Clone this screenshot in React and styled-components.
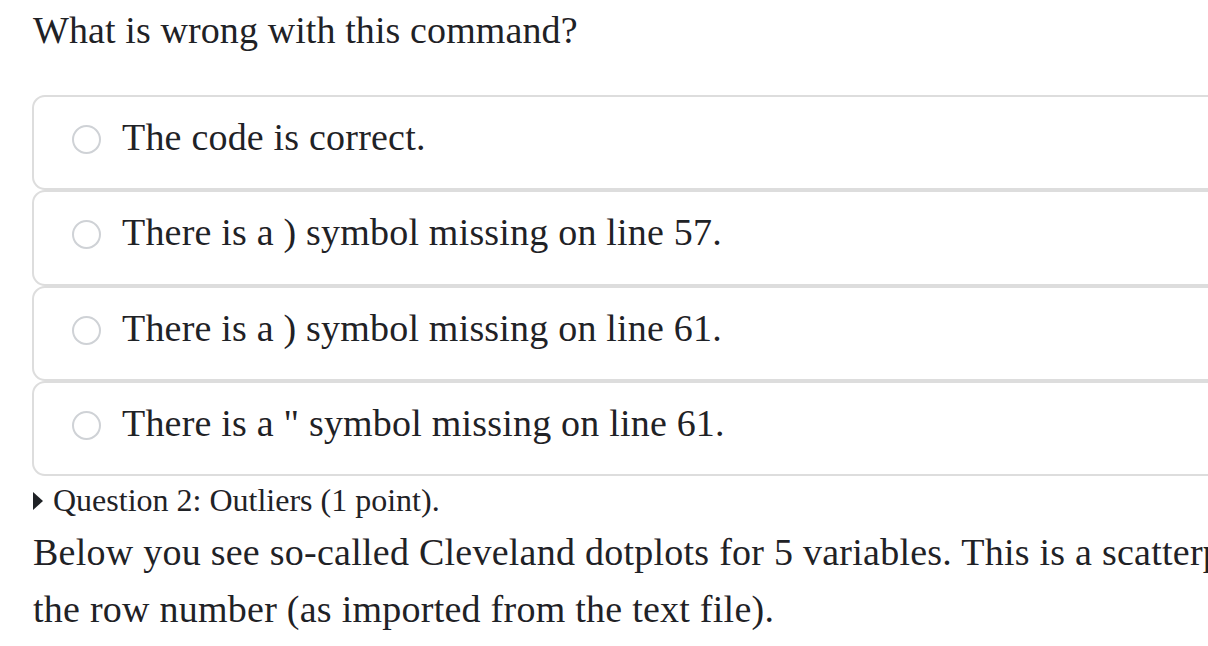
import React from "react";
import styled, { createGlobalStyle } from "styled-components";

const Global = createGlobalStyle`
  html, body { margin: 0; padding: 0; background: #fff; overflow: hidden; }
  body { font-family: "Liberation Serif", "Times New Roman", serif; color: #1f2226; }
`;

const Page = styled.div`
  width: 1400px;
  padding: 2px 0 0 33px;
  box-sizing: border-box;
`;

const Title = styled.p`
  margin: 0 0 36px 0;
  font-size: 38px;
  line-height: 57px;
  letter-spacing: 0.1px;
`;

const Options = styled.div`
  display: flex;
  flex-direction: column;
  margin-left: -1px;
`;

const Option = styled.label`
  display: flex;
  align-items: center;
  gap: 21px;
  height: 95.33px;
  box-sizing: border-box;
  border: 2px solid #dddddd;
  border-radius: 13px;
  padding: 12px 0 22px 38px;
  font-size: 38px;
  line-height: 57px;
  letter-spacing: 0.2px;
`;

const Radio = styled.span`
  width: 29px;
  height: 29px;
  box-sizing: border-box;
  border: 2px solid #cfd2d6;
  border-radius: 50%;
  flex: none;
  margin-top: 4px;
`;

const Summary = styled.div`
  display: flex;
  align-items: center;
  gap: 10px;
  font-size: 32px;
  line-height: 48px;
`;

const Triangle = styled.span`
  width: 0;
  height: 0;
  border-top: 9px solid transparent;
  border-bottom: 9px solid transparent;
  border-left: 10px solid #1f2226;
  margin-top: 2px;
`;

const Body = styled.p`
  margin: 0;
  font-size: 38px;
  line-height: 57px;
  letter-spacing: 0.25px;
  white-space: nowrap;
`;

const options = [
  "The code is correct.",
  "There is a ) symbol missing on line 57.",
  "There is a ) symbol missing on line 61.",
  'There is a " symbol missing on line 61.',
];

export default function App() {
  return (
    <>
      <Global />
      <Page>
        <Title>What is wrong with this command?</Title>
        <Options>
          {options.map((o) => (
            <Option key={o}>
              <Radio />
              <span>{o}</span>
            </Option>
          ))}
        </Options>
        <Summary>
          <Triangle />
          <span>Question 2: Outliers (1 point).</span>
        </Summary>
        <Body>
          Below you see so-called Cleveland dotplots for 5 variables. This is a scatterp
          <br />
          the row number (as imported from the text file).
        </Body>
      </Page>
    </>
  );
}
